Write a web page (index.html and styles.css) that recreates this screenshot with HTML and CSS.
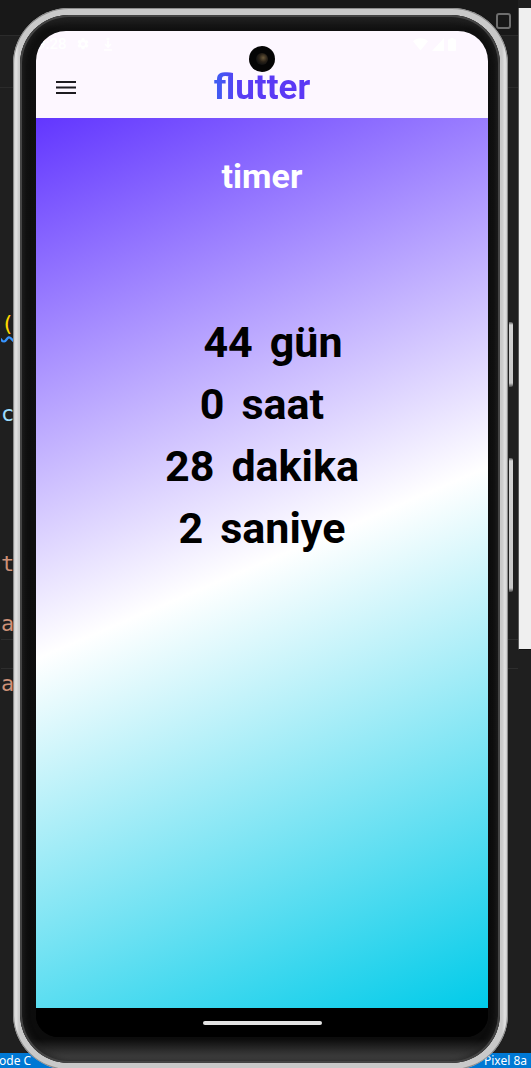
FILE: index.html
```html
<!DOCTYPE html>
<html lang="tr">
<head>
<meta charset="utf-8">
<title>flutter timer</title>
<link rel="stylesheet" href="styles.css">
</head>
<body>
<div class="desktop">
  <div class="workspace">
    <div class="main">
      <div class="tabs"></div>
      <div class="crumbs"></div>
      <div class="code">
        <div class="ln"></div><div class="ln"></div><div class="ln"></div><div class="ln"></div>
        <div class="ln"></div><div class="ln"></div><div class="ln"></div>
        <div class="ln"><span class="paren">(</span></div>
        <div class="ln"></div><div class="ln"></div>
        <div class="ln"><span class="var">c</span></div>
        <div class="ln"></div><div class="ln"></div><div class="ln"></div><div class="ln"></div>
        <div class="ln"><span class="str">t</span></div>
        <div class="ln"></div>
        <div class="ln"><span class="str">a</span></div>
        <div class="ln current"></div>
        <div class="ln"><span class="str">a</span></div>
      </div>
    </div>
    <div class="side">
      <div class="panel"></div>
    </div>
  </div>
  <div class="vsbar">
    <span class="vs-left">ode C</span>
    <span class="vs-right">Pixel 8a</span>
  </div>

  <div class="topbtn"></div>

  <div class="phone">
    <div class="sidekey key-a"></div>
    <div class="sidekey key-b"></div>
    <div class="bezel">
      <div class="screen">
        <div class="sysbar">
          <div class="sys-left">
            <span class="clock">9:28</span>
            <svg class="sys-ico" width="14" height="14" viewBox="0 0 24 24"><path fill="#fff" d="M19.14 12.94c.04-.3.06-.61.06-.94s-.02-.64-.07-.94l2.03-1.58a.49.49 0 0 0 .12-.61l-1.920-3.32a.49.49 0 0 0-.59-.22l-2.39.96c-.5-.38-1.03-.7-1.62-.94l-.36-2.54A.48.48 0 0 0 13.92 2h-3.840c-.24 0-.43.17-.47.41l-.36 2.54c-.59.24-1.130.57-1.62.94l-2.39-.96a.48.48 0 0 0-.59.22L2.73 8.47a.47.47 0 0 0 .12.61l2.03 1.58c-.05.3-.09.63-.09.94s.02.64.07.94l-2.03 1.58a.49.49 0 0 0-.12.61l1.92 3.32c.12.22.37.29.59.22l2.39-.96c.5.38 1.03.7 1.62.94l.36 2.54c.05.24.24.41.48.41h3.84c.24 0 .44-.17.47-.41l.36-2.54c.59-.24 1.13-.56 1.62-.94l2.39.96c.22.08.47 0 .59-.22l1.92-3.32c.12-.22.07-.47-.12-.61l-2.01-1.58zM12 15.6A3.6 3.6 0 1 1 12 8.4a3.6 3.6 0 0 1 0 7.2z"/></svg>
            <svg class="sys-ico small" width="10" height="14" viewBox="0 0 10 14"><circle cx="5" cy="2" r="1.6" fill="#fff"/><path d="M5 4v5M2 7l3 3 3-3M1 13h8" stroke="#fff" stroke-width="1.6" fill="none"/></svg>
          </div>
          <div class="sys-right">
            <svg width="15" height="13" viewBox="0 0 15 13"><path fill="#fff" d="M7.5 12.5 0 3.2C2 1.4 4.6.3 7.5.3s5.5 1.1 7.5 2.9z"/></svg>
            <svg width="12" height="13" viewBox="0 0 12 13"><path fill="#fff" d="M12 0v13H0z"/></svg>
            <svg width="8" height="13" viewBox="0 0 8 13"><path fill="#fff" d="M2.5 0h3v1.2H7a1 1 0 0 1 1 1V12a1 1 0 0 1-1 1H1a1 1 0 0 1-1-1V2.2a1 1 0 0 1 1-1h1.5z"/></svg>
          </div>
        </div>
        <div class="appbar">
          <svg class="menu" width="20" height="13" viewBox="0 0 20 13"><rect y="0" width="20" height="2" fill="#1d1b20"/><rect y="5.5" width="20" height="2" fill="#1d1b20"/><rect y="11" width="20" height="2" fill="#1d1b20"/></svg>
          <h1 class="brand">flutter</h1>
        </div>
        <div class="content">
          <div class="heading">timer</div>
          <div class="rows">
            <div class="row first"><span>44</span><span>gün</span></div>
            <div class="row"><span>0</span><span>saat</span></div>
            <div class="row"><span>28</span><span>dakika</span></div>
            <div class="row"><span>2</span><span>saniye</span></div>
          </div>
        </div>
        <div class="navbar"><div class="homebar"></div></div>
        <div class="camera"><div class="lens"></div></div>
      </div>
    </div>
  </div>
</div>
</body>
</html>
```

FILE: styles.css
```css
html, body {
  margin: 0;
  padding: 0;
  background: #1f1f1f;
}

.desktop {
  position: relative;
  width: 531px;
  height: 1068px;
  overflow: hidden;
  background: #1f1f1f;
  font-family: "Noto Sans", "Open Sans", sans-serif;
}

.workspace {
  display: flex;
  height: 1053px;
}

.main {
  flex: 1;
  display: flex;
  flex-direction: column;
  overflow: hidden;
}

.tabs {
  height: 35px;
  background: #181818;
  border-bottom: 1px solid #2b2b2b;
  flex-shrink: 0;
}

.crumbs {
  height: 51px;
  border-bottom: 1px solid #2b2b2b;
  flex-shrink: 0;
}

.code {
  padding-top: 11.4px;
  padding-left: 1px;
  font-family: "DejaVu Sans Mono", "Liberation Mono", monospace;
  font-size: 22px;
}

.ln {
  height: 30px;
  line-height: 30px;
  box-sizing: border-box;
  white-space: pre;
}

.ln.current {
  border-top: 1px solid #2e2e2e;
  border-bottom: 1px solid #2e2e2e;
}

.paren {
  color: #ffd700;
  text-decoration: underline wavy #3794ff;
  text-underline-offset: 4px;
}

.var { color: #9cdcfe; }
.str { color: #ce9178; }

.side {
  width: 13px;
  flex-shrink: 0;
  padding-top: 8px;
}

.panel {
  height: 641px;
  background: #efefef;
  border-left: 1px solid #5a5a5a;
  border-bottom: 1px solid #111;
}

.vsbar {
  height: 15px;
  box-sizing: border-box;
  background: #0078d4;
  color: #fff;
  display: flex;
  justify-content: space-between;
  align-items: flex-end;
  font-size: 12px;
  line-height: 14px;
}

.vs-left { margin-left: -1px; }
.vs-right { margin-right: 4px; }

/* small emulator control peeking out behind the frame */
.topbtn {
  position: absolute;
  left: 496px;
  top: 13px;
  width: 11px;
  height: 12px;
  border: 2px solid #6e6e6e;
  border-radius: 3px;
}

/* device frame */
.phone {
  position: absolute;
  left: 13px;
  top: 8px;
  width: 495px;
  height: 1062px;
  box-sizing: border-box;
  padding: 7px 8px 7px 7px;
  border-radius: 56px;
  background: linear-gradient(90deg, #bcbcbc 0, #e2e2e2 3px, #c9c9c9 6px, #c9c9c9 calc(100% - 6px), #e2e2e2 calc(100% - 3px), #bcbcbc 100%);
  box-shadow: inset 0 0 0 1px #8c8c8c;
}

.sidekey {
  position: absolute;
  left: 496px;
  width: 4px;
  background: linear-gradient(#5a5a5a 0, #d4d4d4 3px, #c8c8c8 calc(100% - 4px), #4a4a4a 100%);
  border-radius: 0 2px 2px 0;
}

.key-a { top: 314px; height: 65px; }
.key-b { top: 450px; height: 134px; }

.bezel {
  height: 100%;
  box-sizing: border-box;
  padding: 16px 12px 26px 16px;
  border-radius: 49px;
  background: linear-gradient(#242424 0, #101010 14px, #0c0c0c calc(100% - 24px), #505050 100%);
  box-shadow: inset 0 0 0 2px #444, inset 0 0 6px 3px #222;
}

.screen {
  position: relative;
  height: 100%;
  display: flex;
  flex-direction: column;
  border-radius: 30px 30px 22px 22px;
  overflow: hidden;
  background: #000;
  font-family: Roboto, "Noto Sans", sans-serif;
}

.sysbar {
  height: 26px;
  flex-shrink: 0;
  background: #fdf7ff;
  display: flex;
  justify-content: space-between;
  align-items: center;
  padding: 0 32px 0 1px;
}

.sys-left, .sys-right {
  display: flex;
  align-items: center;
}

.sys-left { gap: 9px; }
.sys-right { gap: 4px; }

.clock {
  color: #fff;
  font-size: 15px;
  font-weight: 500;
}

.sys-ico.small { margin-left: 4px; }

.appbar {
  height: 61px;
  flex-shrink: 0;
  background: #fdf7ff;
  display: flex;
  align-items: center;
  justify-content: center;
  position: relative;
}

.menu {
  position: absolute;
  left: 20px;
  top: 24px;
}

.brand {
  margin: 0;
  font-size: 35px;
  font-weight: 700;
  line-height: 41px;
  background: linear-gradient(90deg, #3e5ef2 0, #5a3df4 28%, #5b37f5 100%);
  -webkit-background-clip: text;
  background-clip: text;
  color: transparent;
}

.content {
  flex: 1;
  display: flex;
  flex-direction: column;
  align-items: center;
  background: linear-gradient(157deg, #6236ff 0%, #ffffff 50%, #00cbe9 100%);
}

.heading {
  margin-top: 38px;
  font-size: 34px;
  line-height: 40px;
  font-weight: 700;
  color: #fff;
}

.rows {
  margin-top: 115px;
  display: flex;
  flex-direction: column;
  align-items: center;
}

.row {
  display: flex;
  gap: 17px;
  font-size: 43px;
  line-height: 62px;
  font-weight: 700;
  color: #000;
}

.row.first { padding-left: 22px; }

.navbar {
  height: 29px;
  flex-shrink: 0;
  background: #000;
  display: flex;
  justify-content: center;
  padding-top: 13px;
  box-sizing: border-box;
}

.homebar {
  width: 119px;
  height: 4px;
  border-radius: 2px;
  background: #e3e3e3;
}

.camera {
  position: absolute;
  left: 213px;
  top: 15px;
  width: 26px;
  height: 26px;
  border-radius: 50%;
  background: #050505;
  display: flex;
  align-items: center;
  justify-content: center;
}

.lens {
  width: 12px;
  height: 12px;
  border-radius: 50%;
  background: radial-gradient(circle at 60% 40%, #6b5a3c 0, #2a2218 40%, #111 70%);
}
```
